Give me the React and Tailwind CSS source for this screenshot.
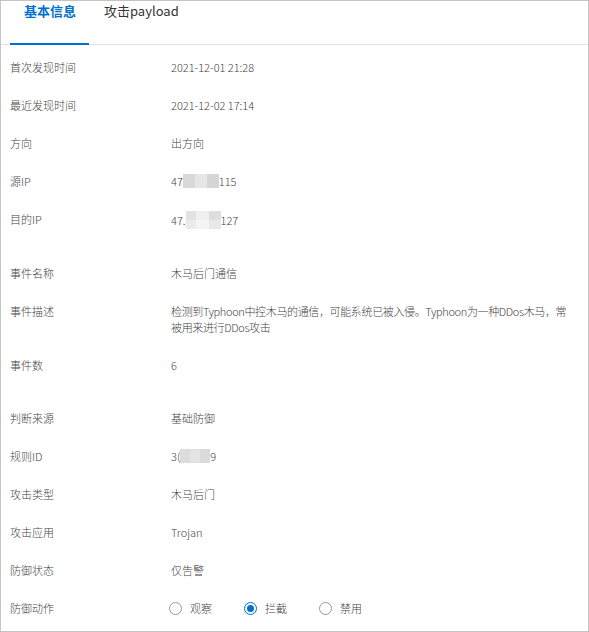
import React from "react";

const FONT = { fontFamily: '"Noto Sans CJK SC", "Noto Sans", sans-serif' };

function Blur({ segs, h = "h-[14px]" }) {
  return (
    <span className={`inline-flex align-middle ${h}`}>
      {segs.map((s, i) => (
        <span key={i} className="block h-full" style={{ width: s[0], background: s[1] }} />
      ))}
    </span>
  );
}

function Row({ label, children, className = "" }) {
  return (
    <div className={`flex min-h-[38px] py-[11px] leading-[16px] ${className}`}>
      <div className="w-[161px] shrink-0 text-[#444]">{label}</div>
      <div className="text-[#444]">{children}</div>
    </div>
  );
}

function Radio({ checked, label }) {
  return (
    <div className="flex items-center gap-[8px]">
      <span
        className={`flex h-[13px] w-[13px] items-center justify-center rounded-full border ${
          checked ? "border-[#0070cc]" : "border-[#8c9bb0]"
        } bg-white`}
      >
        {checked && <span className="block h-[7px] w-[7px] rounded-full bg-[#0070cc]" />}
      </span>
      <span className="text-[#444]">{label}</span>
    </div>
  );
}

export default function App() {
  return (
    <div
      className="box-border h-[632px] w-[589px] overflow-hidden border border-[#c4c4c4] bg-white text-[11px] font-light"
      style={FONT}
    >
      <div className="flex h-[44px] items-stretch border-b border-[#e2e2e2] pl-[9px]">
        <div className="flex flex-col px-[14px]">
          <div className="text-[13px] leading-[20px] font-bold text-[#0070cc]">基本信息</div>
          <div className="flex-1" />
        </div>
        <div className="flex flex-col px-[14px]">
          <div className="text-[13px] leading-[20px] font-normal text-[#333]">攻击payload</div>
        </div>
      </div>
      <div className="relative -mt-[2px] ml-[9px] h-[2px] w-[79px] bg-[#0070cc]" />
      <div className="pl-[9px] pt-[3px]">
        <Row label="首次发现时间">2021-12-01 21:28</Row>
        <Row label="最近发现时间">2021-12-02 17:14</Row>
        <Row label="方向">出方向</Row>
        <Row label="源IP">
          <span className="inline-flex items-center">
            47
            <Blur
              segs={[
                [12, "#d9d9d9"],
                [12, "#e6e6e6"],
                [12, "#d6d6d6"],
              ]}
            />
            115
          </span>
        </Row>
        <Row label="目的IP">
          <span className="inline-flex items-center">
            47.
            <span className="inline-flex flex-col">
              <Blur
                h="h-[9px]"
                segs={[
                  [10, "#e2e2e2"],
                  [13, "#efefef"],
                  [12, "#dedede"],
                ]}
              />
              <Blur
                h="h-[9px]"
                segs={[
                  [10, "#ebebeb"],
                  [13, "#f4f4f4"],
                  [12, "#e8e8e8"],
                ]}
              />
            </span>
            127
          </span>
        </Row>

        <div className="mt-[14px]">
          <Row label="事件名称">木马后门通信</Row>
          <Row label="事件描述">
            <span className="whitespace-nowrap tracking-[-0.36px]">
              检测到Typhoon中控木马的通信，可能系统已被入侵。Typhoon为一种DDos木马，常
              <br />
              被用来进行DDos攻击
            </span>
          </Row>
          <Row label="事件数">6</Row>
        </div>

        <div className="mt-[15px]">
          <Row label="判断来源">基础防御</Row>
          <Row label="规则ID">
            <span className="inline-flex items-center">
              3(
              <Blur
                segs={[
                  [10, "#dcdcdc"],
                  [10, "#e4e4e4"],
                  [10, "#dadada"],
                ]}
              />
              9
            </span>
          </Row>
          <Row label="攻击类型">木马后门</Row>
          <Row label="攻击应用">Trojan</Row>
          <Row label="防御状态">仅告警</Row>
          <div className="flex h-[38px] items-center">
            <div className="w-[159px] shrink-0 text-[#444]">防御动作</div>
            <div className="flex items-center gap-[32px]">
              <Radio label="观察" />
              <Radio checked label="拦截" />
              <Radio label="禁用" />
            </div>
          </div>
        </div>
      </div>
    </div>
  );
}
